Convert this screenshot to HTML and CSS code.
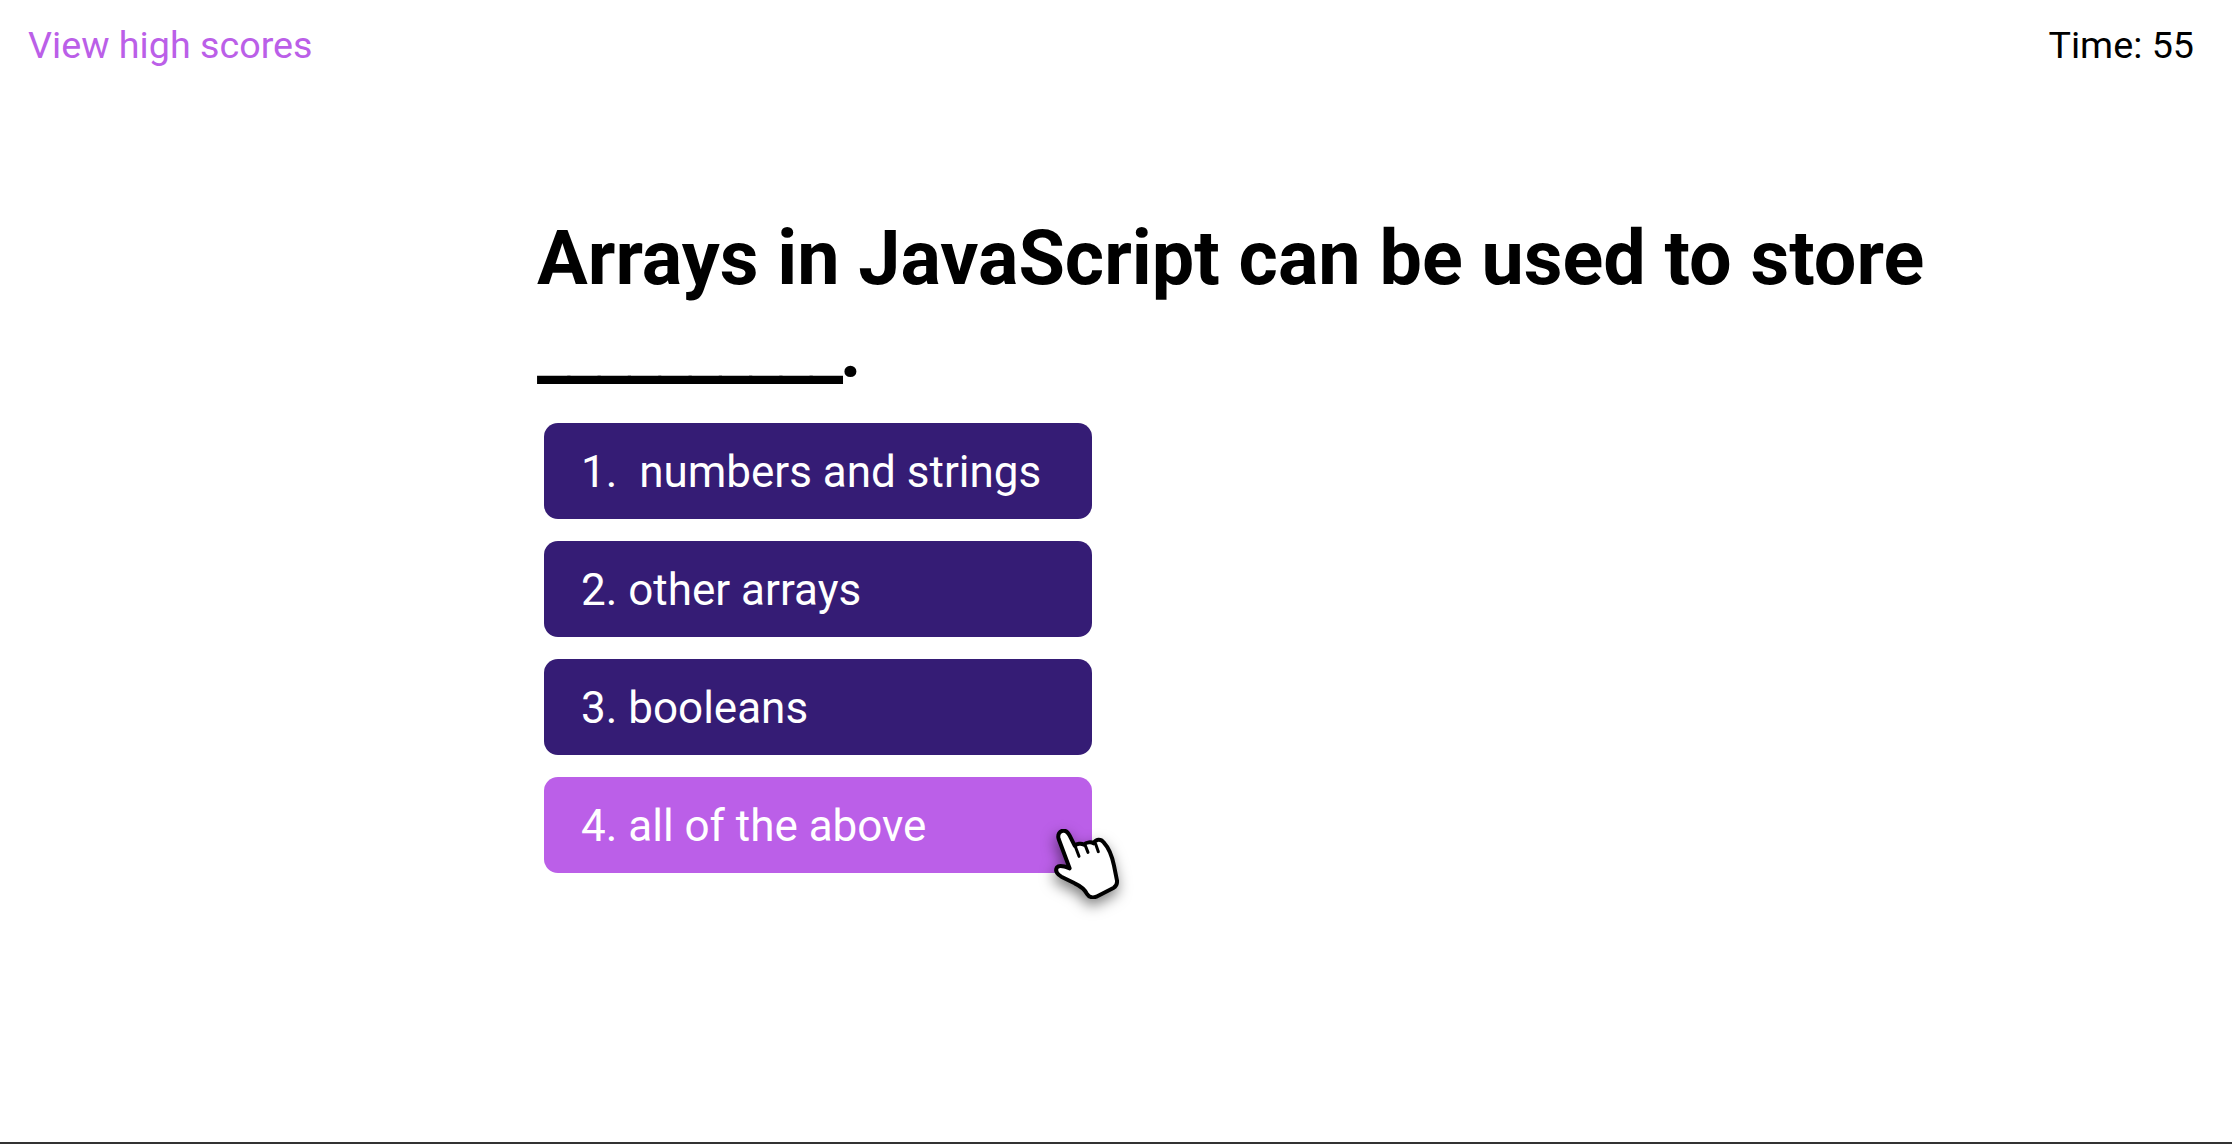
FILE: index.html
```html
<!DOCTYPE html>
<html lang="en">
<head>
<meta charset="utf-8">
<title>Quiz</title>
<link rel="stylesheet" href="styles.css">
</head>
<body>
<div class="page">
  <header class="top">
    <a class="scores" href="#">View high scores</a>
    <div class="time">Time: 55</div>
  </header>
  <main class="quiz">
    <h1 class="question">Arrays in JavaScript can be used to store <span class="blank">__________</span>.</h1>
    <div class="answers">
      <button class="answer">1.&nbsp; numbers and strings</button>
      <button class="answer">2. other arrays</button>
      <button class="answer">3. booleans</button>
      <button class="answer active">4. all of the above
        <svg class="cursor" viewBox="0 0 210 210" width="70" height="70" aria-hidden="true">
          <path d="M17 30C13 17 20 6 30 5C38 4 45 10 50 20L65 50C72 44 85 42 92 47C100 39 115 38 122 43C128 30 143 28 152 40C166 55 176 75 183 110L192 155C193 165 190 172 181 177L130 203C120 207 108 205 102 195C95 180 80 170 65 163L25 143C12 135 6 125 12 115C18 108 30 110 50 118Z" fill="#fff" stroke="#000" stroke-width="12" stroke-linejoin="round"/>
          <path d="M66 50L78 82M97 50L105 70M128 45L136 68" fill="none" stroke="#000" stroke-width="9" stroke-linecap="round"/>
        </svg>
      </button>
    </div>
  </main>
</div>
</body>
</html>
```
FILE: styles.css
```css
html, body {
  margin: 0;
  height: 100%;
  background: #fff;
  font-family: Roboto, "Liberation Sans", sans-serif;
}
.page {
  box-sizing: border-box;
  height: 1144px;
  overflow: hidden;
  border-bottom: 2px solid #333;
  display: flex;
  flex-direction: column;
}
.top {
  display: flex;
  justify-content: space-between;
  align-items: center;
  padding: 23px 38px 0 28px;
  font-size: 37.7px;
  line-height: 44px;
}
.scores {
  color: #bb5fe8;
  text-decoration: none;
}
.time {
  color: #000;
}
.quiz {
  margin: 145px 0 0 537px;
  width: 1420px;
}
.question {
  margin: 0;
  font-size: 75.5px;
  line-height: 92px;
  font-weight: 700;
  color: #000;
}
.blank {
  letter-spacing: -3.3px;
}
.answers {
  display: flex;
  flex-direction: column;
  align-items: flex-start;
  gap: 22px;
  margin: 27px 0 0 7px;
}
.answer {
  position: relative;
  width: 548px;
  height: 96px;
  padding: 2px 0 0 37px;
  border: 0;
  border-radius: 14px;
  background: #351c75;
  color: #fff;
  font-family: inherit;
  font-size: 44px;
  text-align: left;
}
.answer.active {
  background: #bb5fe8;
}
.cursor {
  position: absolute;
  left: 509px;
  top: 52px;
  filter: drop-shadow(-1px 6px 7px rgba(0, 0, 0, .5));
}
```
